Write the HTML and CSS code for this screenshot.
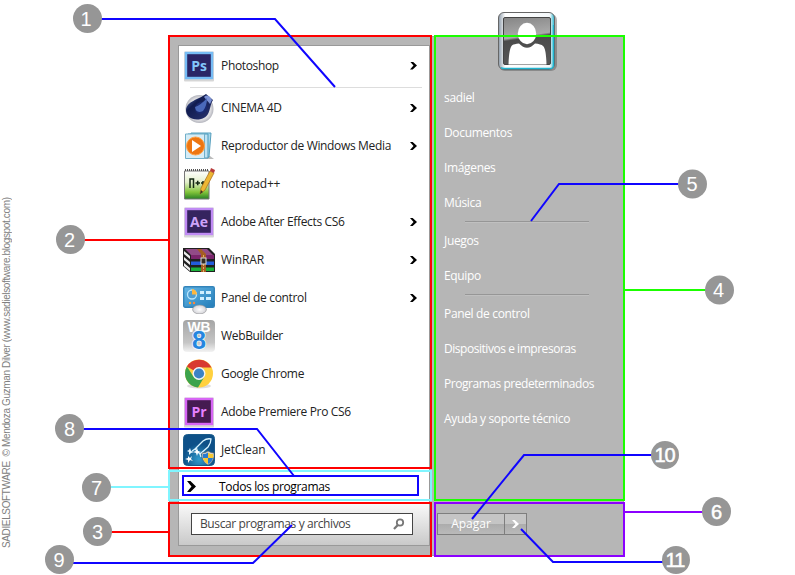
FILE: index.html
```html
<!DOCTYPE html>
<html lang="es">
<head>
<meta charset="utf-8">
<title>Menú de inicio</title>
<link rel="stylesheet" href="styles.css">
</head>
<body>
<div class="page">
<p class="credit"><svg width="12" height="356"><text transform="translate(9.5 352) rotate(-90)" textLength="351">SADIELSOFTWARE&#160; © Mendoza Guzman Dilver (www.sadielsoftware.blogspot.com)</text></svg></p>

<main class="menu">
  <section class="left">
    <ul class="programs">
      <li class="first"><span class="icon"><svg viewBox="0 0 32 32"><use href="#shade"/><rect x="3" y="3" width="26" height="25" fill="#2a2566" stroke="#76bcf5" stroke-width="2.4"/><text class="adobe" x="16" y="21" fill="#84c7fb">Ps</text></svg></span><span class="name">Photoshop</span><i class="arrow"></i></li>
      <li class="rule"></li>
      <li><span class="icon"><svg viewBox="0 0 32 32"><circle cx="16.5" cy="17" r="14" fill="url(#silver)"/><path d="M3 18C4 9 15 8 23 2L30 8C26 14 28 25 18 27C10 29 3 25 3 18Z" fill="url(#drop)"/><path d="M21 5Q25 1 29 8L27 12Z" fill="#7c92d4"/><ellipse cx="18" cy="16" rx="6.5" ry="5.5" fill="#1b2a70" transform="rotate(-40 18 16)"/><path d="M12 15Q18 13 24 6Q24 14 20 19Q13 22 12 15Z" fill="#4a69ba"/></svg></span><span class="name">CINEMA 4D</span><i class="arrow"></i></li>
      <li><span class="icon"><svg viewBox="0 0 32 32"><path d="M6 29H31L27 26Z" fill="#bbb"/><path d="M8 3H28L26 27H8Z" fill="#a9d9ed" stroke="#559ebd"/><path d="M5 4H25V28H5Z" fill="#bfe2f2" stroke="#4b9abb"/><path d="M2.5 4H21.5V28.500H2.500Z" fill="#d5ecf6" stroke="#71afca"/><circle cx="12.500" cy="16" r="9" fill="#ee7611" stroke="#ffa147"/><path d="M9 10L18 16L9 22Z" fill="#fff"/></svg></span><span class="name">Reproductor de Windows Media</span><i class="arrow"></i></li>
      <li><span class="icon"><svg viewBox="0 0 32 32"><path d="M1.500 3H26V31H1.500Z" fill="url(#note)" stroke="#777"/><path d="M2 2H25" stroke="#555" stroke-width="2" stroke-dasharray="1 1"/><path d="M7 20V11H10.500V20M12.500 15H17M14.700 12.800V17.200M18 15H22M20 13V17" fill="none" stroke="#142814" stroke-width="1.500"/><path d="M17 26L18 20L27 3L31 5L22 22Z" fill="#edb734" stroke="#a6691a" stroke-width=".7"/><path d="M27 3L28 0L32 2L31 5Z" fill="#b73b3b"/><path d="M17 26L18 22L20 24Z" fill="#332"/></svg></span><span class="name wide">notepad++</span></li>
      <li><span class="icon"><svg viewBox="0 0 32 32"><use href="#shade"/><rect x="3" y="3" width="26" height="25" fill="#35245f" stroke="#c08bf4" stroke-width="2.4"/><text class="adobe" x="16" y="21" fill="#cda4fa">Ae</text></svg></span><span class="name">Adobe After Effects CS6</span><i class="arrow"></i></li>
      <li><span class="icon"><svg viewBox="0 0 32 32"><path d="M0 4H26L32 10V28H7L0 22Z" fill="#202020"/><path d="M2 5H24L30 11H8Z" fill="#914b87"/><path d="M8 11H31V15H8Z" fill="#7a246c"/><path d="M8 17.500H31V21H8Z" fill="#235cdb"/><path d="M8 23.500H31V27H8Z" fill="#1bb03a"/><path d="M1 7L7 12V15L1 10ZM1 13L7 18V21L1 16ZM1 19L7 24V27L1 22Z" fill="#eee"/><path d="M14 5L18 10V28H23V10L18 5Z" fill="#a55d22"/><path d="M20.500 11V28" stroke="#e1ad62" stroke-dasharray="2 1"/><rect x="18" y="14" width="5" height="6" fill="#352c22" stroke="#ddd"/></svg></span><span class="name wide">WinRAR</span><i class="arrow"></i></li>
      <li><span class="icon"><svg viewBox="0 0 32 32"><rect x=".7" y="4.700" width="30.600" height="20.600" rx="1.500" fill="url(#panel)" stroke="#3384ba" stroke-width="1.400"/><circle cx="9" cy="12.500" r="4.500" fill="#4e9dd1" stroke="#b9e5fc" stroke-width="1.300"/><path d="M9 12.500V7A5.500 5.500 0 0 1 14 12.500Z" fill="#ffb73e"/><g fill="#cfefff"><path d="M17 9H21V12H17ZM23 9H28V12H23ZM17 15H21V18H17ZM23 15H28V18H23Z"/></g><circle cx="7" cy="21" r="1.200" fill="#ffa338"/><circle cx="11" cy="21" r="1.200" fill="#ff853a"/><ellipse cx="16.500" cy="27.500" rx="7" ry="4.500" fill="url(#silver)" stroke="#999" stroke-width=".5"/></svg></span><span class="name">Panel de control</span><i class="arrow"></i></li>
      <li><span class="icon"><svg viewBox="0 0 32 32"><rect width="32" height="32" rx="4" fill="url(#web)"/><text class="wb" x="16" y="12" textLength="23" lengthAdjust="spacingAndGlyphs">WB</text><text class="eight" x="16" y="29">8</text></svg></span><span class="name">WebBuilder</span></li>
      <li><span class="icon"><svg viewBox="0 0 32 32"><ellipse cx="16" cy="28" rx="12" ry="2.500" fill="#ddd"/><circle cx="16" cy="15.500" r="14" fill="#ffd13f"/><path d="M16 15.500L3.900 8.500A14 14 0 0 1 28.500 9.500H16Z" fill="#d83a31"/><path d="M3.900 8.500A14 14 0 0 0 15 29.500L21.500 18.500L10 18Z" fill="#3ca34c"/><circle cx="16" cy="15.500" r="6.500" fill="#f5f5f5"/><circle cx="16" cy="15.500" r="5.100" fill="#3c83c5"/></svg></span><span class="name">Google Chrome</span></li>
      <li><span class="icon"><svg viewBox="0 0 32 32"><use href="#shade"/><rect x="3" y="3" width="26" height="25" fill="#451b51" stroke="#d765f5" stroke-width="2.4"/><text class="adobe" x="16" y="21" fill="#e681ff">Pr</text></svg></span><span class="name">Adobe Premiere Pro CS6</span></li>
      <li><span class="icon"><svg viewBox="0 0 32 32"><rect x=".5" y=".5" width="31" height="31" rx="4" fill="url(#jet)" stroke="#195b8a"/><path d="M12 15L20 7Q24 4 28 5Q28 9 25 13L17 20ZM12 15L9 17L14 14M17 20L18 23" fill="none" stroke="#d8f3ff" stroke-width="1.300"/><path d="M5 22L7 24L9 22L8 25L10 27L7 26L5 29L5 26L2 25L5 24ZM14 14L15 17L18 18L15 19L14 22L13 19L10 18L13 17Z" fill="#fff"/><path d="M7 14L8 17L11 18L8 19L6 21L6 18L4 17L6 16Z" fill="#e7f8ff"/><path d="M25 17Q28 19 31 19Q32 27 25 31Q18 27 19 19Q23 19 25 17Z" fill="#ddd" stroke="#555" stroke-width=".6"/><path d="M25 18.500V24H20Q19.500 22 20 20Q23 20 25 18.500ZM25 24H30Q29 28 25 30Z" fill="#277bd0"/><path d="M25 18.500V24H30Q30.500 22 30 20Q27 20 25 18.500ZM25 24H20Q21 28 25 30Z" fill="#f5c833"/></svg></span><span class="name wide">JetClean</span></li>
    </ul>
    <div class="all"><i class="arrow big"></i><span>Todos los programas</span></div>
    <div class="search"><div class="field"><span>Buscar programas y archivos</span><svg width="12" height="13" viewBox="0 0 12 13"><circle cx="7" cy="4.500" r="3.200" fill="none" stroke="#777" stroke-width="1.800"/><path d="M4.800 7L1 11" stroke="#777" stroke-width="2.200"/></svg></div></div>
  </section>

  <nav class="right">
    <a>sadiel</a><a>Documentos</a><a>Imágenes</a><a>Música</a><hr>
    <a>Juegos</a><a>Equipo</a><hr>
    <a>Panel de control</a><a class="tight">Dispositivos e impresoras</a><a class="tight">Programas predeterminados</a><a>Ayuda y soporte técnico</a>
    <div class="power"><span class="off">Apagar</span><span class="more"><i class="arrow light"></i></span></div>
  </nav>
</main>

<svg class="overlay" width="795" height="575">
  <defs>
    <rect id="shade" x="1" y="1.500" width="30" height="30" rx="1" fill="#777" opacity=".3"/>
    <radialGradient id="silver"><stop stop-color="#fff"/><stop offset=".8" stop-color="#dcdce0"/><stop offset="1" stop-color="#b4b5bd"/></radialGradient>
    <linearGradient id="drop" x2="1" y2="1"><stop stop-color="#6684cb"/><stop offset=".35" stop-color="#111c50"/><stop offset=".8" stop-color="#232d68"/><stop offset="1" stop-color="#8fa3d4"/></linearGradient>
    <linearGradient id="note" x2="0" y2="1"><stop stop-color="#fff"/><stop offset=".4" stop-color="#e3efcc"/><stop offset=".75" stop-color="#83c53b"/><stop offset="1" stop-color="#278024"/></linearGradient>
    <linearGradient id="panel" x2="1" y2="1"><stop stop-color="#65b7e6"/><stop offset="1" stop-color="#237db9"/></linearGradient>
    <linearGradient id="web" x2="0" y2="1"><stop stop-color="#a5a5a5"/><stop offset=".7" stop-color="#c5c5c5"/><stop offset="1" stop-color="#f3f3f3"/></linearGradient>
    <radialGradient id="jet" cy=".8"><stop stop-color="#319bcc"/><stop offset="1" stop-color="#0d5088"/></radialGradient>
    <linearGradient id="frame" x2="1"><stop stop-color="#8c9aa8"/><stop offset=".12" stop-color="#fff"/><stop offset=".92" stop-color="#f4f8fa"/><stop offset="1" stop-color="#20b4ce"/></linearGradient>
    <linearGradient id="photo" x2=".15" y2="1"><stop stop-color="#858585"/><stop offset=".45" stop-color="#aaa"/><stop offset=".5" stop-color="#4b4b4b"/><stop offset="1" stop-color="#575757"/></linearGradient>
  </defs>

  <g class="avatar">
    <rect x="499" y="14" width="58" height="57" rx="6" fill="#555" opacity=".45"/>
    <rect x="498.500" y="12.500" width="56" height="57" rx="5.500" fill="url(#frame)" stroke="#666"/>
    <path d="M501 67.500Q502 68.500 504 68.500H550Q553.500 68.500 553.500 65V25" fill="none" stroke="#20b5d0" stroke-width="1.300"/>
    <rect x="503.500" y="17.500" width="47" height="47" rx="1.500" fill="url(#photo)" stroke="#444"/>
    <path d="M508.500 64.500Q509 47 512.500 45Q514 44 519 43.500Q527 52 535 43.500Q541 44 543 46Q546 48 546.500 64.500Z" fill="#fff"/>
    <ellipse cx="527" cy="33.500" rx="9.200" ry="10.700" fill="#fff"/>
  </g>

  <g class="boxes">
    <rect class="red" x="169" y="36" width="262" height="432"/>
    <rect class="cyan" x="169" y="471" width="262" height="29"/>
    <rect class="red" x="169" y="503" width="262" height="53"/>
    <rect class="green" x="435" y="36" width="189" height="464"/>
    <rect class="violet" x="435" y="503" width="189" height="53"/>
    <rect class="blue" x="183" y="476" width="235" height="19"/>
  </g>
  <g class="leaders">
    <path class="blue" d="M101 19H275L335 87"/>
    <path class="red" d="M84 240H168M111 532H168"/>
    <path class="cyan" d="M110 487H168"/>
    <path class="blue" d="M83 429H257L294 476M73 563H253L292 525"/>
    <path class="blue" d="M679 184H559L531 221M652 455H524L472 519M663 562H553L521 529"/>
    <path class="green" d="M625 290H706"/>
    <path class="violet" d="M625 512H703"/>
  </g>
  <g class="badges">
    <circle cx="87.500" cy="18.500" r="14.500"/><text x="86" y="26">1</text>
    <circle cx="70.500" cy="239.500" r="14.500"/><text x="69.500" y="247">2</text>
    <circle cx="97.500" cy="531.500" r="14.500"/><text x="97.500" y="539">3</text>
    <circle cx="719.500" cy="290" r="14.500"/><text x="718.500" y="297">4</text>
    <circle cx="692.500" cy="184" r="14.500"/><text x="692" y="191">5</text>
    <circle cx="716.500" cy="511.500" r="14.500"/><text class="heavy" x="716.500" y="519">6</text>
    <circle cx="96.500" cy="487.500" r="14.500"/><text x="96.500" y="495">7</text>
    <circle cx="69.500" cy="428.500" r="14.500"/><text x="69.500" y="436">8</text>
    <circle cx="59.500" cy="559.500" r="14.500"/><text x="59" y="567">9</text>
    <circle cx="665" cy="455" r="14"/><text class="heavy two" x="664.500" y="462">10</text>
    <circle cx="676" cy="560" r="14"/><text class="heavy two" x="675" y="567">11</text>
  </g>
</svg>
</div>
</body>
</html>
```
FILE: styles.css
```css
* { box-sizing: border-box; }

body {
  margin: 0;
  background: #fff;
  font: 12px/16px "Open Sans", "Noto Sans", sans-serif;
  letter-spacing: -.34px;
  color: #222;
}

.page {
  position: relative;
  display: flex;
  align-items: flex-start;
  width: 795px;
  height: 575px;
  overflow: hidden;
}

.credit { margin: 196px 0 0; width: 12px; height: 356px; letter-spacing: 0; }
.credit svg { display: block; }
.credit text { font: 10px "Liberation Sans", sans-serif; fill: #808080; }

.menu {
  display: grid;
  grid-template-columns: 252px 1fr;
  gap: 5px;
  width: 455px;
  height: 520px;
  margin: 36px 0 0 157px;
  padding: 8px 0 10px 8px;
  border: 1px solid #a0a0a0;
  background: #b6b6b6;
}

.left {
  display: flex;
  flex-direction: column;
  border: 1px solid #999;
  background: #fff;
  height: 501px;
}

.programs { list-style: none; margin: 0; padding: 0; height: 424px; }
.programs li { display: flex; align-items: center; height: 38px; padding: 0 12px 0 4px; }
.programs .first { height: 39px; }
.programs .rule { height: 1px; margin: 2px 7px 1px 11px; padding: 0; background: #ddd; }
.icon { width: 32px; height: 32px; margin-right: 6px; letter-spacing: 0; }
.icon svg { display: block; width: 32px; height: 32px; }
.name { white-space: nowrap; }
.wide { letter-spacing: -.15px; }

.adobe { font: bold 14px "Open Sans", sans-serif; text-anchor: middle; }
.wb { font: bold 14px "Liberation Sans", sans-serif; fill: #fff; text-anchor: middle; }
.eight { font: bold 25px "Liberation Sans", sans-serif; fill: #2586df; stroke: #eff8ff; stroke-width: 1.6px; paint-order: stroke; text-anchor: middle; }

.arrow {
  width: 7px;
  height: 8px;
  margin-left: auto;
  background: #000;
  clip-path: polygon(0 0, 38% 0, 100% 50%, 38% 100%, 0 100%, 50% 50%);
}
.arrow.big { width: 9px; height: 11px; margin: 0 23px 0 0; }
.arrow.light { margin: 0; background: #fff; }

.all {
  display: flex;
  align-items: center;
  height: 33px;
  padding: 0 8px;
  color: #000;
}

.search {
  height: 42px;
  padding: 10px 16px 10px 12px;
  background: linear-gradient(#fafafa, #c9c9c9);
}
.field {
  display: flex;
  align-items: center;
  justify-content: space-between;
  height: 22px;
  padding: 0 7px 0 8px;
  border: 1px solid #444;
  background: #fff;
  color: #444;
  letter-spacing: -.4px;
}

.right {
  display: flex;
  flex-direction: column;
  padding-top: 35px;
  padding-left: 2px;
  color: #fff;
}
.right a { flex: none; height: 35px; padding-left: 7px; line-height: 35px; white-space: nowrap; }
.right .tight { letter-spacing: -.46px; }
.right hr { flex: none; width: 124px; height: 2px; margin: 1px 0 0 28px; border: 0; border-top: 1px solid #969696; border-bottom: 1px solid #c0c0c0; }

.power { display: flex; flex: none; width: 90px; height: 22px; margin-top: 77px; border: 1px solid #7e7e7e; letter-spacing: 0; }
.power span { display: flex; align-items: center; justify-content: center; background: linear-gradient(#c5c5c5 50%, #acacac 50%, #bababa); }
.power .off { width: 67px; border-right: 1px solid #7e7e7e; }
.power .more { flex: 1; }

.overlay { position: absolute; left: 0; top: 0; pointer-events: none; letter-spacing: 0; }
.boxes, .leaders { fill: none; stroke-width: 2px; }
.red { stroke: #f00; }
.cyan { stroke: #80f5ff; }
.green { stroke: #1bff00; }
.violet { stroke: #8b00ff; }
.blue { stroke: #1005ff; }
.badges circle { fill: #969696; }
.badges text { font: 20px "Liberation Sans", sans-serif; fill: #fff; text-anchor: middle; }
.badges .heavy { stroke: #fff; stroke-width: .5px; }
.badges .two { letter-spacing: -1px; }
```
